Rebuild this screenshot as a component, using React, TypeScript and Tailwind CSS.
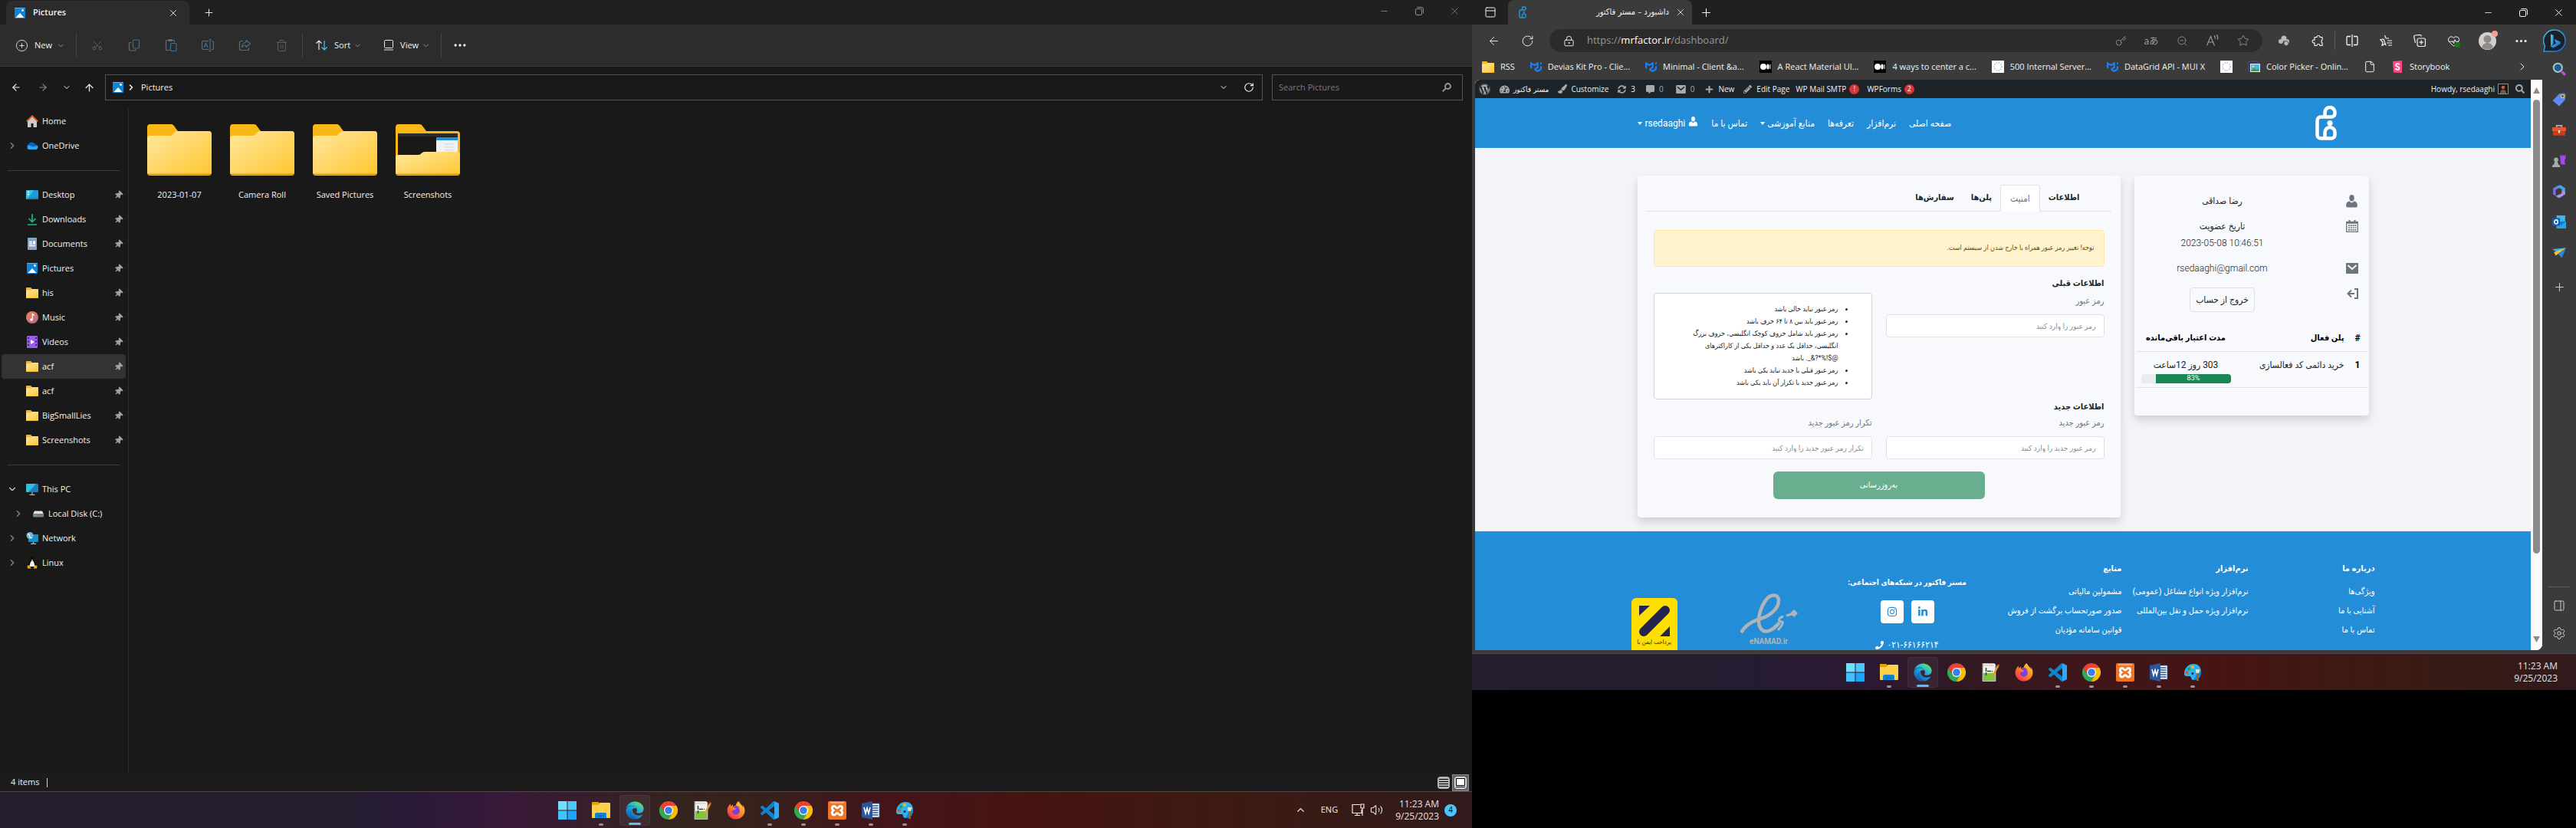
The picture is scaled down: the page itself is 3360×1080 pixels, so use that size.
import { useId, type ReactNode } from "react";
import {
  ArrowLeft, ArrowRight, ArrowUp, ChevronDown, ChevronRight, ChevronUp, CirclePlus,
  File, HeartPulse, Key, LockKeyhole, Minus, MoreHorizontal, PanelRight, PanelTop, Plus, RotateCw,
  Scissors, Search, Settings, Star, Trash2, Volume2, X, ZoomOut,
} from "lucide-react";
import {
  FaCommentAlt, FaEdge, FaFirefoxBrowser, FaInstagram, FaLinkedinIn, FaPaintBrush, FaPencilAlt, FaPhoneAlt, FaPlus,
  FaSearch, FaSyncAlt, FaTachometerAlt, FaThumbtack, FaWordpress,
} from "react-icons/fa";
import { SiMui } from "react-icons/si";

type Kids = { children?: ReactNode };

/* ---------- shared icons ---------- */

function FolderIcon({ w = 16, h = 14, preview = false }: { w?: number; h?: number; preview?: boolean }) {
  const id = useId();
  return (
    <svg width={w} height={h} viewBox="0 0 84 67" preserveAspectRatio="none" aria-hidden="true">
      <defs>
        <linearGradient id={id} x1="0" y1="0" x2="1" y2="1">
          <stop offset="0" stopColor="#ffe8a0" />
          <stop offset="1" stopColor="#ffc62e" />
        </linearGradient>
      </defs>
      <path d="M4 0h27c3 0 4 2 6 5l3 4h40a4 4 0 0 1 4 4v49H0V4a4 4 0 0 1 4-4z" fill="#f9b818" />
      {preview ? (
        <>
          <path d="M3 12h78v34H3z" fill="#191919" />
          <path d="M3 12h78v4H3z" fill="#2b2b2b" />
          <path d="M53 17h28v29H53z" fill="#eef1f6" />
          <path d="M53 17h28v4H53z" fill="#238ed7" />
          <path d="M64 26h12M64 30h12M64 34h12" stroke="#d3d7dd" />
          <path d="M0 44a4 4 0 0 1 4-4h26c3 0 4-4 8-4h42a4 4 0 0 1 4 4v23a4 4 0 0 1-4 4H4a4 4 0 0 1-4-4z" fill={`url(#${id})`} />
        </>
      ) : (
        <path d="M0 19a4 4 0 0 1 4-4h26c4 0 5-6 9-6h41a4 4 0 0 1 4 4v50a4 4 0 0 1-4 4H4a4 4 0 0 1-4-4z" fill={`url(#${id})`} />
      )}
      <path d="M1 65.500h82" stroke="#c98f15" strokeWidth="1.500" />
    </svg>
  );
}

function PictureIcon() {
  return (
    <svg width="16" height="16" viewBox="0 0 16 16" aria-hidden="true">
      <rect x="1" y="1" width="14" height="14" rx="1" fill="#0f83d6" />
      <path d="M1 2a1 1 0 0 1 1-1h12a1 1 0 0 1 1 1z" fill="#55b8f3" />
      <path d="M2.500 14 8 8l5.500 6z" fill="#fff" />
      <circle cx="11.500" cy="4.500" r="1.400" fill="#fff" />
    </svg>
  );
}

const svg16 = { width: 16, height: 16, viewBox: "0 0 16 16", "aria-hidden": true } as const;

const RestoreIcon = () => (
  <svg width="11" height="11" viewBox="0 0 11 11" fill="none" stroke="currentColor" aria-hidden="true">
    <rect x=".500" y="2.500" width="8" height="8" rx="1.500" />
    <path d="M2.500.500H8a2.500 2.500 0 0 1 2.500 2.500v5.500" />
  </svg>
);

const HomeIcon = () => (
  <svg {...svg16}>
    <path d="M2 7.500 8 2l6 5.500V16H9.500v-5h-3v5H2z" fill="#c9cbce" />
    <path d="M.800 8.500 8 1.300l7.200 7.200" fill="none" stroke="#e8681a" strokeWidth="1.800" />
  </svg>
);
const CloudIcon = () => (
  <svg {...svg16}>
    <path d="M4 13a4 4 0 0 1-.500-7.400A5 5 0 0 1 12 6.500 3.300 3.300 0 0 1 13 13z" fill="#0a63c0" />
    <path d="M3 13a3 3 0 0 1 0-5c3-1 4 1 6 1.500L14.500 8A3.200 3.200 0 0 1 13 13z" fill="#2aa5f0" />
  </svg>
);
const DesktopIcon = () => (
  <svg {...svg16}>
    <rect y="2" width="16" height="12" rx="1" fill="#1b9bd8" />
    <path d="M0 3a1 1 0 0 1 1-1h9L2 14H1a1 1 0 0 1-1-1z" fill="#38c7e2" />
    <path d="M2 4.500h2M2 7.500h2" stroke="#fff" strokeWidth="1.500" />
    <path d="M0 13h16" stroke="#0d6db0" />
  </svg>
);
const DownloadIcon = () => (
  <svg {...svg16} fill="none" stroke="#22b58b" strokeWidth="1.700">
    <path d="M8 1v10M3.500 7 8 11.500 12.500 7M2 15h12" />
  </svg>
);
const DocIcon = () => (
  <svg {...svg16}>
    <rect x="2" width="12" height="16" rx="1" fill="#8aa4c0" />
    <path d="M4 5.500h4M4 8h4M4 10.500h8" stroke="#fff" strokeWidth="1.300" />
    <rect x="9" y="4.500" width="3" height="4" fill="#fff" />
  </svg>
);
function MusicIcon() {
  const id = useId();
  return (
    <svg {...svg16}>
      <defs>
        <linearGradient id={id} x1="0" y1="0" x2="1" y2="1">
          <stop offset="0" stopColor="#f08a4b" />
          <stop offset="1" stopColor="#b85c9a" />
        </linearGradient>
      </defs>
      <circle cx="8" cy="8" r="8" fill={`url(#${id})`} />
      <circle cx="7" cy="11" r="1.800" fill="#fff" />
      <path d="M8.300 11V3.500l2.500 2" fill="none" stroke="#fff" strokeWidth="1.200" />
    </svg>
  );
}
const VideoIcon = () => (
  <svg {...svg16}>
    <rect x="1" width="14" height="16" rx="1" fill="#9b5cf0" />
    <path d="M3 2v12M13 2v12" stroke="#3c1a78" strokeWidth="1.800" strokeDasharray="2 2.500" />
    <path d="M6 5v6l5-3z" fill="#fff" />
  </svg>
);
const PcIcon = () => (
  <svg {...svg16}>
    <rect y="1" width="16" height="11" rx="1" fill="#1480c4" />
    <path d="M0 2a1 1 0 0 1 1-1h12L3 12H1a1 1 0 0 1-1-1z" fill="#2fc0e0" />
    <path d="M8 12v3M4.500 15.300h7" stroke="#a8b4be" strokeWidth="1.300" />
  </svg>
);
const DiskIcon = () => (
  <svg {...svg16}>
    <path d="M3 4.500h10l2 4H1z" fill="#e2e4e7" />
    <rect x="1" y="8" width="14" height="4.500" rx="1" fill="#7b7f84" />
    <circle cx="4" cy="10.300" r=".900" fill="#4be05a" />
  </svg>
);
const NetworkIcon = () => (
  <svg {...svg16}>
    <rect x="3" y="3" width="13" height="10" rx="1" fill="#1590c8" />
    <path d="M9.500 13v2M6 15.300h7" stroke="#a8b4be" strokeWidth="1.300" />
    <circle cx="5" cy="4.500" r="4.500" fill="#6fb4dc" />
    <path d="M2 2.500c2 0 3 1 2.500 3S7 7 7.500 8" stroke="#dff1fb" strokeWidth="1.500" fill="none" />
  </svg>
);
const LinuxIcon = () => (
  <svg {...svg16}>
    <path d="M8 0c2 0 2.500 1.500 2.500 4S14 9 13 13l-5 2-5-2C2 9 5.500 6.500 5.500 4S6 0 8 0z" fill="#0b0b0b" />
    <path d="M8 5c2 1 3.500 4 3 8H5c-.500-4 1-7 3-8z" fill="#f5f5f5" />
    <path d="M6.500 4h3L8 5.500zM1.500 12l3-1 2 4.500H2zM14.500 12l-3-1-2 4.500H14z" fill="#e3a51a" />
  </svg>
);

/* ---------- taskbar ---------- */

const WindowsIcon = () => (
  <svg width="24" height="24" viewBox="0 0 24 24" aria-hidden="true">
    <path d="M0 0h11.500v11.500H0z" fill="#6fe0fb" />
    <path d="M12.500 0H24v11.500H12.500z" fill="#4cc8fb" />
    <path d="M0 12.500h11.500V24H0z" fill="#45c1fa" />
    <path d="M12.500 12.500H24V24H12.500z" fill="#1ea4fb" />
  </svg>
);
const ExplorerIcon = () => (
  <svg width="24" height="24" viewBox="0 0 24 24" aria-hidden="true">
    <path d="M0 2a1 1 0 0 1 1-1h7l2 2.500H0z" fill="#e5a10a" />
    <path d="M0 6V3h9l2-1h12a1 1 0 0 1 1 1v18a1 1 0 0 1-1 1H1a1 1 0 0 1-1-1z" fill="#ffd04a" />
    <path d="M0 5V2a1 1 0 0 1 1-1h7l2 2-2 2z" fill="#e5a10a" />
    <path d="M4 22v-5a2 2 0 0 1 2-2h11a2 2 0 0 1 2 2v5z" fill="#1583d4" />
    <path d="M7.500 19h8" stroke="#0b62ab" strokeWidth="1.200" />
  </svg>
);
function EdgeIcon() {
  const id = useId();
  return (
    <>
      <svg width="0" height="0" className="absolute" aria-hidden="true">
        <linearGradient id={id} x1="0.200" y1="1" x2="0.800" y2="0.100">
          <stop offset="0" stopColor="#0c59a4" />
          <stop offset=".5" stopColor="#1b9de2" />
          <stop offset=".8" stopColor="#34c6bd" />
          <stop offset="1" stopColor="#66e05a" />
        </linearGradient>
      </svg>
      <FaEdge size={24} fill={`url(#${id})`} />
    </>
  );
}
function FirefoxIcon() {
  const id = useId();
  return (
    <>
      <svg width="0" height="0" className="absolute" aria-hidden="true">
        <linearGradient id={id} x1="1" y1="0" x2="0.200" y2="1">
          <stop offset="0" stopColor="#ffe14a" />
          <stop offset=".5" stopColor="#ff8a1e" />
          <stop offset="1" stopColor="#f8245c" />
        </linearGradient>
      </svg>
      <span className="relative flex size-6 items-center justify-center">
        <span className="absolute size-3 rounded-full bg-[#7a3fe0]" />
        <FaFirefoxBrowser size={24} fill={`url(#${id})`} className="relative" />
      </span>
    </>
  );
}
const ChromeIcon = () => (
  <svg width="24" height="24" viewBox="0 0 24 24" aria-hidden="true">
    <path d="M12 12V6h10.400A12 12 0 0 1 12 24z" fill="#fbbc05" />
    <path d="M12 12 17.200 15 12 24A12 12 0 0 1 1.600 6l5.200 9z" fill="#34a853" />
    <path d="M1.600 6A12 12 0 0 1 12 0a12 12 0 0 1 10.400 6H12l-5.200 9z" fill="#e94335" />
    <circle cx="12" cy="12" r="6" fill="#fff" />
    <circle cx="12" cy="12" r="4.800" fill="#3b7ded" />
  </svg>
);
const NotepadIcon = () => (
  <svg width="24" height="24" viewBox="0 0 24 24" aria-hidden="true">
    <path d="M2 0h15l2 2v22H2z" fill="#f1f1ef" stroke="#8d8d8d" />
    <path d="M3 13h15v10H3z" fill="#7fc63a" />
    <path d="M6.500 6v10M8 10.500h7" stroke="#3b3b3b" strokeWidth="1.500" strokeDasharray="5 1" />
    <path d="M3 3h14" stroke="#b5b5b5" strokeDasharray="1 1" strokeWidth="1.500" />
    <path d="M22.500 3 15 17" stroke="#e0a020" strokeWidth="2.500" />
    <path d="m23.200 1.500-1 2" stroke="#c3423c" strokeWidth="2.500" />
  </svg>
);
const CodeIcon = () => (
  <svg width="24" height="24" viewBox="0 0 24 24" aria-hidden="true">
    <path
      d="M23.150 2.587L18.210.210a1.494 1.494 0 0 0-1.705.290l-9.460 8.630-4.120-3.128a.999.999 0 0 0-1.276.057L.327 7.261A1 1 0 0 0 .326 8.740L3.899 12 .326 15.260a1 1 0 0 0 .001 1.479L1.650 17.940a.999.999 0 0 0 1.276.057l4.120-3.128 9.460 8.630a1.492 1.492 0 0 0 1.704.290l4.942-2.377A1.500 1.500 0 0 0 24 20.060V3.939a1.500 1.500 0 0 0-.850-1.352zm-5.146 14.861L10.826 12l7.178-5.448v10.896z"
      fill="#0f83cc"
    />
    <path d="M18 .200 23.150 2.600A1.500 1.500 0 0 1 24 4v16a1.500 1.500 0 0 1-.850 1.400L18 23.800z" fill="#2fa8f0" />
  </svg>
);
const XamppIcon = () => (
  <svg width="24" height="24" viewBox="0 0 24 24" aria-hidden="true">
    <rect width="24" height="24" rx="2" fill="#ee7426" />
    <path d="M3 2h18" stroke="#f8b98c" strokeWidth="1.500" />
    <path
      d="M8 6.500c-3.500 0-3.500 4.500-.500 5.500-3 1-3 6 .500 6 2 0 2.500-2.500 4-2.500s2 2.500 4 2.500c3.500 0 3.500-5 .500-6 3-1 3-5.500-.500-5.500-2 0-2 2.500-4 2.500s-2-2.500-4-2.500z"
      fill="none" stroke="#fff" strokeWidth="2.800" strokeLinejoin="round"
    />
  </svg>
);
const WordIcon = () => (
  <svg width="24" height="24" viewBox="0 0 24 24" aria-hidden="true">
    <rect x="11" y="3" width="12" height="18" fill="#fff" stroke="#2b579a" strokeWidth=".8" />
    <path d="M14 6h7.500M14 9h7.500M14 12h7.500M14 15h7.500M14 18h7.500" stroke="#2b579a" strokeWidth="1.400" />
    <path d="M0 3 14 0v24L0 21z" fill="#2b579a" />
    <path d="m3 8 2 8 2-7 2 7 2-8" fill="none" stroke="#fff" strokeWidth="1.600" />
  </svg>
);
const PaintIcon = () => (
  <svg width="24" height="24" viewBox="0 0 24 24" aria-hidden="true">
    <path d="M13 1c7 0 10 5 10 10 0 8-5 11-10 11-4 0-2-5-5-5s-7 1-7-3C1 7 6 1 13 1z" fill="#2db4ec" />
    <path d="M13 22c5 0 10-3 10-11l-4-1-4 9z" fill="#1482cf" />
    <circle cx="4.500" cy="12" r="2" fill="#e64a30" />
    <circle cx="7" cy="7.500" r="2" fill="#2f9b3d" />
    <circle cx="12" cy="5" r="2" fill="#f5b51a" />
    <circle cx="12" cy="13.500" r="1.500" fill="#14324d" />
    <path d="M16 8h5v3l-1 2h-3l-1-2z" fill="#f2d9b4" />
    <path d="M18.500 13v10" stroke="#a5641c" strokeWidth="2.800" />
  </svg>
);

const apps: { name: string; icon: ReactNode; state: "idle" | "open" | "active" }[] = [
  { name: "Start", icon: <WindowsIcon />, state: "idle" },
  { name: "File Explorer", icon: <ExplorerIcon />, state: "open" },
  { name: "Edge", icon: <EdgeIcon />, state: "active" },
  { name: "Chrome", icon: <ChromeIcon />, state: "idle" },
  { name: "Notepad++", icon: <NotepadIcon />, state: "idle" },
  { name: "Firefox", icon: <FirefoxIcon />, state: "idle" },
  { name: "Code", icon: <CodeIcon />, state: "open" },
  { name: "Chrome profile", icon: <ChromeIcon />, state: "open" },
  { name: "XAMPP", icon: <XamppIcon />, state: "open" },
  { name: "Word", icon: <WordIcon />, state: "open" },
  { name: "Paint", icon: <PaintIcon />, state: "open" },
];

const markClass = {
  idle: "hidden",
  open: "absolute bottom-0 h-[3px] w-1.5 rounded-full bg-[#a08d96]",
  active: "absolute bottom-0 h-[3px] w-4 rounded-full bg-[#4cc2ff]",
};

function AppStrip() {
  return (
    <div className="flex justify-center gap-1">
      {apps.map((a) => (
        <button
          key={a.name}
          aria-label={a.name}
          className={
            a.state === "active"
              ? "relative flex size-10 items-center justify-center rounded border border-white/5 bg-white/5"
              : "relative flex size-10 items-center justify-center"
          }
        >
          {a.icon}
          <span className={markClass[a.state]} />
        </button>
      ))}
    </div>
  );
}

const Clock = () => (
  <div className="text-right font-[Open_Sans] text-[12px] leading-4 text-[#e6e0e0]">
    <p>11:23 AM</p>
    <p>9/25/2023</p>
  </div>
);

/* ---------- file explorer ---------- */

const Tool = ({ label, children }: Kids & { label: string }) => (
  <button aria-label={label} className="flex w-12 items-center justify-center text-[#6a6a6a]">
    {children}
  </button>
);

const line16 = { ...svg16, fill: "none", stroke: "#6a6a6a", strokeWidth: 1.2 } as const;
const blue = "#3e6f8c";

type Place = { name: string; icon: ReactNode; chevron?: "right" | "down"; pin?: boolean; selected?: boolean; nested?: boolean };

const folder = <FolderIcon />;
const placeGroups: Place[][] = [
  [
    { name: "Home", icon: <HomeIcon /> },
    { name: "OneDrive", icon: <CloudIcon />, chevron: "right" },
  ],
  [
    { name: "Desktop", icon: <DesktopIcon />, pin: true },
    { name: "Downloads", icon: <DownloadIcon />, pin: true },
    { name: "Documents", icon: <DocIcon />, pin: true },
    { name: "Pictures", icon: <PictureIcon />, pin: true },
    { name: "his", icon: folder, pin: true },
    { name: "Music", icon: <MusicIcon />, pin: true },
    { name: "Videos", icon: <VideoIcon />, pin: true },
    { name: "acf", icon: folder, pin: true, selected: true },
    { name: "acf", icon: folder, pin: true },
    { name: "BigSmallLies", icon: folder, pin: true },
    { name: "Screenshots", icon: folder, pin: true },
  ],
  [
    { name: "This PC", icon: <PcIcon />, chevron: "down" },
    { name: "Local Disk (C:)", icon: <DiskIcon />, chevron: "right", nested: true },
    { name: "Network", icon: <NetworkIcon />, chevron: "right" },
    { name: "Linux", icon: <LinuxIcon />, chevron: "right" },
  ],
];

function PlaceRow({ p }: { p: Place }) {
  return (
    <li className={p.selected ? "rounded-sm bg-[#333333]" : ""}>
      <button className={p.nested ? "flex h-8 w-full items-center pl-3.5" : "flex h-8 w-full items-center pl-1.5"}>
        <span className="flex w-4 justify-center">
          {p.chevron === "right" && <ChevronRight size={14} className="text-[#8a8a8a]" />}
          {p.chevron === "down" && <ChevronDown size={14} className="text-[#d0d0d0]" />}
        </span>
        <span className="ml-2.5 flex w-4 justify-center">{p.icon}</span>
        <span className="ml-[5px] flex-1 text-left">{p.name}</span>
        {p.pin && <FaThumbtack size={11} className="mr-1 rotate-45 text-[#98a2ab]" />}
      </button>
    </li>
  );
}

function Explorer() {
  return (
    <section className="flex h-screen min-w-0 flex-[4] flex-col bg-[#191919] font-[Open_Sans] text-[11px] text-[#f2f2f2]">
      <header className="flex h-8 items-end bg-[#202020] pl-2">
        <div className="flex h-[31px] w-[239px] items-center rounded-t-lg bg-[#2c2c2c] px-2.5">
          <PictureIcon />
          <span className="ml-[9px] flex-1 font-semibold">Pictures</span>
          <button aria-label="Close tab" className="mr-1"><X size={14} strokeWidth={1.5} /></button>
        </div>
        <button aria-label="New tab" className="flex h-8 w-[50px] items-center justify-center"><Plus size={15} strokeWidth={1.5} /></button>
        <div className="ml-auto flex h-7 items-center self-start text-[#8c8c8c]">
          <button aria-label="Minimize" className="flex w-[46px] justify-center"><Minus size={13} strokeWidth={1.5} /></button>
          <button aria-label="Restore" className="flex w-[46px] justify-center"><RestoreIcon /></button>
          <button aria-label="Close" className="flex w-[46px] justify-center"><X size={15} strokeWidth={1.2} /></button>
        </div>
      </header>

      <div className="flex h-[55px] items-stretch border-b border-[#3c3c3c] bg-[#2c2c2c] py-[11px]">
        <button className="flex w-[99px] items-center pl-5">
          <CirclePlus size={17} strokeWidth={1.2} />
          <span className="ml-2">New</span>
          <ChevronDown size={11} className="ml-1.5 text-[#9a9a9a]" />
        </button>
        <div className="flex border-x border-[#424242] px-[3px]">
          <Tool label="Cut"><Scissors size={16} strokeWidth={1.2} className="-rotate-90" /></Tool>
          <Tool label="Copy">
            <svg {...line16}><path d="M4 4.500H2.500a1 1 0 0 0-1 1v8a1.500 1.500 0 0 0 1.500 1.500h6a1 1 0 0 0 1-1V13" /><rect x="6.500" y="1" width="8" height="11" rx="1.500" stroke={blue} /></svg>
          </Tool>
          <Tool label="Paste">
            <svg {...line16}><path d="M6.500 14.500h-4a1 1 0 0 1-1-1v-11a1 1 0 0 1 1-1h9a1 1 0 0 1 1 1V4M5 .500h4v2H5z" /><rect x="7.500" y="5.500" width="7.500" height="10" rx="1" stroke={blue} /></svg>
          </Tool>
          <Tool label="Rename">
            <svg {...line16}><path d="M9 2.500H2.500a2 2 0 0 0-2 2v7a2 2 0 0 0 2 2H9M13 2.500h.500a2 2 0 0 1 2 2v7a2 2 0 0 1-2 2H13" /><path d="M3 11l2.500-6L8 11M4 9h3M11 1v14M9.500.500h3M9.500 15.500h3" stroke={blue} /></svg>
          </Tool>
          <Tool label="Share">
            <svg {...line16}><path d="M6 2.500H3.500a2 2 0 0 0-2 2v8a2 2 0 0 0 2 2h8a2 2 0 0 0 2-2V11" /><path d="M10 1.500 15.500 6 10 10.500V8C7 8 5.500 9 4.500 11c0-4 2-6.500 5.500-7z" stroke={blue} strokeLinejoin="round" /></svg>
          </Tool>
          <Tool label="Delete"><Trash2 size={17} strokeWidth={1.2} /></Tool>
        </div>
        <button className="flex items-center pl-4">
          <svg width="17" height="16" viewBox="0 0 17 16" fill="none" strokeWidth="1.200" aria-hidden="true">
            <path d="M5 14V2M1.500 5.500 5 2l3.500 3.500" stroke="#e8e8e8" />
            <path d="M12 2v12M8.500 10.500 12 14l3.500-3.500" stroke="#4cc2ff" />
          </svg>
          <span className="ml-2">Sort</span>
          <ChevronDown size={11} className="ml-1 text-[#9a9a9a]" />
        </button>
        <button className="flex items-center border-r border-[#424242] pr-3.5 pl-7">
          <svg width="14" height="14" viewBox="0 0 14 14" fill="none" stroke="#e8e8e8" aria-hidden="true">
            <rect x="1.500" y=".500" width="11" height="10" rx="1" />
            <path d="M1 13h12" />
          </svg>
          <span className="ml-2">View</span>
          <ChevronDown size={11} className="ml-1 text-[#9a9a9a]" />
        </button>
        <button aria-label="More" className="flex w-12 items-center justify-center"><MoreHorizontal size={20} /></button>
      </div>

      <div className="flex items-center pt-2.5 pr-3 pb-[11px]">
        <div className="flex w-[137px] items-center text-[#f0f0f0]">
          <button aria-label="Back" className="ml-3.5"><ArrowLeft size={14} /></button>
          <button aria-label="Forward" className="ml-[21px] text-[#8a8a8a]"><ArrowRight size={14} /></button>
          <button aria-label="Recent" className="ml-[18px]"><ChevronDown size={12} /></button>
          <button aria-label="Up" className="ml-4"><ArrowUp size={15} /></button>
        </div>
        <div className="flex h-[34px] flex-1 items-center border border-[#535353] px-2">
          <PictureIcon />
          <ChevronRight size={12} strokeWidth={3} className="ml-[3px]" />
          <span className="ml-[7px] flex-1">Pictures</span>
          <button aria-label="History"><ChevronDown size={12} /></button>
          <button aria-label="Refresh" className="mr-0.5 ml-5"><RotateCw size={14} /></button>
        </div>
        <label className="ml-3 flex h-[34px] w-[249px] items-center border border-[#535353] px-2">
          <input aria-label="Search Pictures" placeholder="Search Pictures" className="min-w-0 flex-1 bg-transparent outline-none placeholder:text-[#7a7a7a]" />
          <svg width="12" height="12" viewBox="0 0 12 12" fill="none" stroke="#9a9a9a" strokeWidth="1.800" className="mr-1.5" aria-hidden="true">
            <circle cx="7.500" cy="4.500" r="3.500" />
            <path d="M5 7 .700 11.300" />
          </svg>
        </label>
      </div>

      <div className="flex min-h-0 flex-1">
        <nav className="w-[168px] border-r border-[#2e2e2e] pr-[3px] pl-0.5">
          {placeGroups.map((g, i) => (
            <ul key={i}>
              {i > 0 && <li className="mr-2 ml-2 flex h-8 items-center"><hr className="w-full border-[#3c3c3c]" /></li>}
              {g.map((p, j) => <PlaceRow key={j} p={p} />)}
            </ul>
          ))}
        </nav>
        <ul className="flex flex-1 flex-wrap content-start pt-5 pl-3">
          {["2023-01-07", "Camera Roll", "Saved Pictures", "Screenshots"].map((n) => (
            <li key={n} className="flex w-[108px] flex-col items-center">
              <FolderIcon w={84} h={67} preview={n === "Screenshots"} />
              <span className="mt-4 leading-[18px]">{n}</span>
            </li>
          ))}
        </ul>
      </div>

      <div className="flex h-[23px] items-center bg-[#1c1c1c] pl-3.5">
        <span>4 items</span>
        <span className="ml-2.5 h-3 w-px bg-[#d0d0d0]" />
        <div className="mr-1 ml-auto flex items-center gap-[3px]">
          <button aria-label="Details view" className="flex size-4 flex-col justify-center gap-0.5 rounded-sm bg-[#b4b4b4] px-0.5">
            <span className="h-px bg-black" /><span className="h-px bg-black" /><span className="h-px bg-black" /><span className="h-px bg-black" />
          </button>
          <button aria-label="Large icons" className="flex size-[22px] items-center justify-center border border-[#8a8a8a] bg-[#636363]">
            <span className="flex size-4 flex-col items-center justify-center gap-px rounded-sm bg-[#d8d8d8]">
              <span className="h-2.5 w-3 border border-black bg-white" />
              <span className="h-px w-3 bg-black" />
            </span>
          </button>
        </div>
      </div>

      <footer className="grid h-12 grid-cols-[1fr_auto_1fr] items-center border-t border-[#54444a] bg-[linear-gradient(90deg,#241e2e_0%,#241d30_24%,#2c1938_29%,#3a1a38_35%,#33241e_46%,#38211c_52%,#43141a_60%,#461410_70%,#3b1a12_85%,#311a1c_100%)]">
        <span />
        <AppStrip />
        <div className="flex items-center justify-end pr-5 text-[#f0eaea]">
          <ChevronUp size={15} />
          <span className="ml-[19px]">ENG</span>
          <svg width="17" height="17" viewBox="0 0 17 17" fill="none" stroke="currentColor" strokeWidth="1.200" className="ml-[18px]" aria-hidden="true">
            <path d="M11 1.500H1v11h12V8M7 12.500V15M4 15.500h7M12 1h4v5h-4zM14 6v10" />
          </svg>
          <Volume2 size={17} strokeWidth={1.5} className="mr-4 ml-[7px]" />
          <Clock />
          <span className="ml-[7px] flex size-4 items-center justify-center rounded-full bg-[#4cc2ff] text-[10px] text-black">4</span>
        </div>
      </footer>
    </section>
  );
}

/* ---------- browser chrome ---------- */

const MediumIcon = () => (
  <svg {...svg16}>
    <path d="M0 0h16v16H0z" fill="#000" />
    <circle cx="5" cy="8" r="4" fill="#fff" />
    <ellipse cx="11" cy="8" rx="1.700" ry="3.600" fill="#fff" />
    <path d="M14 5v6" stroke="#fff" />
  </svg>
);
const SpinnerIcon = () => (
  <svg {...svg16}>
    <path d="M0 0h16v16H0z" fill="#fff" />
    <circle cx="8" cy="8" r="5" fill="none" stroke="#9fb4cc" strokeWidth="2" strokeDasharray="1 2" />
  </svg>
);
const BrandMark = ({ size, color }: { size: number; color: string }) => (
  <svg width={(size * 28) / 45} height={size} viewBox="0 0 28 45" fill="none" stroke={color} strokeWidth="4.500" aria-hidden="true">
    <path d="M12.500 15V8.500a6.500 6.500 0 0 1 13 0V10a4.500 4.500 0 0 1-4.500 4.500H7A4.500 4.500 0 0 0 2.500 19v19A4.500 4.500 0 0 0 7 42.500h14a4.500 4.500 0 0 0 4.500-4.500v-3.500a6.500 6.500 0 0 0-13 0v8" />
    <circle cx="19" cy="22.500" r="3.500" fill={color} stroke="none" />
  </svg>
);
const StorybookIcon = () => (
  <svg {...svg16}>
    <path d="m2 1 12-1v16L3 15.500z" fill="#ff4785" />
    <path d="M10.500 5.500C10 3.500 6 3.700 6 6s4.500 1.500 4.500 4-4.500 2.300-4.700.200" fill="none" stroke="#fff" strokeWidth="1.800" />
  </svg>
);
const PickerIcon = () => (
  <svg {...svg16}>
    <path d="M1 1h12v13H1z" fill="none" stroke="#5c4ab0" strokeDasharray="2 1" />
    <path d="M3 4h13v11H3z" fill="#e8eef5" />
    <path d="M4 5h11v9H4z" fill="#57b2ec" />
    <path d="m4 14 4-5 3 3 2-2 2 4z" fill="#4a9a3c" />
    <circle cx="7" cy="7.500" r="1.300" fill="#ffe04a" />
  </svg>
);
const mui = <SiMui size={15} className="text-[#1684f4]" />;

const bookmarks: { icon: ReactNode; text?: string }[] = [
  { icon: <FolderIcon w={16} h={15} />, text: "RSS" },
  { icon: mui, text: "Devias Kit Pro - Clie..." },
  { icon: mui, text: "Minimal - Client &a..." },
  { icon: <MediumIcon />, text: "A React Material UI..." },
  { icon: <MediumIcon />, text: "4 ways to center a c..." },
  { icon: <SpinnerIcon />, text: "500 Internal Server..." },
  { icon: mui, text: "DataGrid API - MUI X" },
  { icon: <SpinnerIcon /> },
  { icon: <PickerIcon />, text: "Color Picker - Onlin..." },
  { icon: <File size={16} strokeWidth={1.5} /> },
  { icon: <StorybookIcon />, text: "Storybook" },
];

const Slot = ({ label, children }: Kids & { label: string }) => (
  <button aria-label={label} className="flex w-11 items-center justify-center">{children}</button>
);
const FieldSlot = ({ label, children }: Kids & { label: string }) => (
  <button aria-label={label} className="flex w-10 items-center justify-center text-[#9b9b9b]">{children}</button>
);

function BingIcon() {
  const id = useId();
  return (
    <svg width="30" height="30" viewBox="0 0 30 30" aria-hidden="true">
      <defs>
        <linearGradient id={id} x1="0" y1="0" x2="1" y2="1">
          <stop offset="0" stopColor="#3fd0e8" />
          <stop offset="1" stopColor="#1b5fd8" />
        </linearGradient>
      </defs>
      <path d="M15 1a14 14 0 1 1 0 28H1l1.500-7A14 14 0 0 1 15 1z" fill="#1b2128" stroke={`url(#${id})`} strokeWidth="1.500" />
      <path d="M10 6.500 13.500 8v11l-3.500 4zM10 22.500l7-4-2.500-5.500 6 2.500a2.500 2.500 0 0 1 0 5L13.500 24.500z" fill={`url(#${id})`} />
    </svg>
  );
}

const svg18 = { width: 18, height: 18, viewBox: "0 0 16 16", "aria-hidden": true } as const;

const sideIcons: { name: string; icon: ReactNode }[] = [
  {
    name: "Search",
    icon: (
      <svg {...svg18}>
        <path d="m11 11 4 4" stroke="#c04be8" strokeWidth="3" />
        <circle cx="6.500" cy="6.500" r="5" fill="#1b5f86" stroke="#aebdc9" strokeWidth="1.800" />
      </svg>
    ),
  },
  {
    name: "Shopping",
    icon: (
      <svg {...svg18}>
        <path d="m8 1 6-.500 1.500 1.500-.500 6L8 15.500.500 9z" fill="#5b8cf5" />
        <circle cx="12" cy="4" r="1.800" fill="#3a4a8c" stroke="#f2c52e" />
      </svg>
    ),
  },
  {
    name: "Tools",
    icon: (
      <svg {...svg18}>
        <path d="M5 5V2.500h6V5" fill="none" stroke="#a8b0b8" strokeWidth="1.500" />
        <path d="M0 4.500h16V9H0z" fill="#e8562a" />
        <path d="M1 9h14v5H1z" fill="#c93d1c" />
        <path d="M7 8h2v3H7z" fill="#e3e6e9" />
      </svg>
    ),
  },
  {
    name: "Games",
    icon: (
      <svg {...svg18}>
        <path d="M9 1h1.500v1.500h1V1H13v1.500h1V1h1.500v4L14.500 6v4l1 2H10z" fill="#a848ef" />
        <path d="M0 15v-2l2-1 1-4H2V6.500a2.500 2.500 0 1 1 5 0V8H6l1 4 2 1v2z" fill="#a5a8ac" />
      </svg>
    ),
  },
  {
    name: "Microsoft 365",
    icon: (
      <svg {...svg18}>
        <path d="M6 1 1 4v7l3 2V6l4-2.500z" fill="#7c6fe0" />
        <path d="m6 1 4-.500 5 3.500v5l-4-2V5L6 3z" fill="#3fa5e8" />
        <path d="M15 8v3l-7 4.500L4 13l7-3V7z" fill="#b98be8" />
      </svg>
    ),
  },
  {
    name: "Outlook",
    icon: (
      <svg {...svg18}>
        <path d="M5 0h10v8H5z" fill="#35b8f1" />
        <path d="M5 7h11v8H5z" fill="#1279cf" />
        <path d="m5 7 5.500 4L16 7v8H5z" fill="#28a2e8" />
        <rect y="3" width="9" height="9" rx="1" fill="#0a5fb4" />
        <ellipse cx="4.500" cy="7.500" rx="2" ry="2.300" fill="none" stroke="#fff" strokeWidth="1.300" />
      </svg>
    ),
  },
  {
    name: "Drop",
    icon: (
      <svg {...svg18}>
        <path d="M0 3.500 16 2l-9 6z" fill="#38b5e8" />
        <path d="m16 2-5 12-4-5z" fill="#2f86e8" />
        <path d="M16 2 2 7l2 4z" fill="#f5c22e" />
      </svg>
    ),
  },
];

/* ---------- web page ---------- */

const Badge = ({ children }: Kids) => (
  <span className="flex size-[13px] items-center justify-center rounded-full bg-[#d63638] text-[9px] text-white">{children}</span>
);

const tabs = ["اطلاعات", "امنیت", "پلن‌ها", "سفارش‌ها"];

const rules: ReactNode[] = [
  "رمز عبور نباید خالی باشد",
  "رمز عبور باید بین ۸ تا ۶۴ حرف باشد",
  <>
    رمز عبور باید شامل حروف کوچک انگلیسی، حروف بزرگ انگلیسی، حداقل یک عدد و حداقل یکی از کاراکترهای{" "}
    <span className="inline-block">@$!%*?&amp;_. باشد</span>
  </>,
  "رمز عبور قبلی با جدید نباید یکی باشد",
  "رمز عبور جدید با تکرار آن باید یکی باشد",
];

function Field({ id, label, placeholder }: { id: string; label: string; placeholder: string }) {
  return (
    <div>
      <label htmlFor={id} className="block leading-[22px] text-[#6c757d]">{label}</label>
      <input
        id={id}
        type="password"
        placeholder={placeholder}
        className="mt-1.5 h-[30px] w-full rounded-sm border border-[#dee2e6] bg-white px-2.5 text-[10px] outline-none placeholder:text-[#868e96]"
      />
    </div>
  );
}

const columns = [
  { title: "درباره ما", links: ["ویژگی‌ها", "آشنایی با ما", "تماس با ما"] },
  { title: "نرم‌افزار", links: ["نرم‌افزار ویژه انواع مشاغل (عمومی)", "نرم‌افزار ویژه حمل و نقل بین‌المللی"] },
  { title: "منابع", links: ["مشمولین مالیاتی", "صدور صورتحساب برگشت از فروش", "قوانین سامانه مؤدیان"] },
];

const Caret = () => (
  <svg width="6" height="4" viewBox="0 0 6 4" className="inline-block" fill="currentColor" aria-hidden="true"><path d="M0 0h6L3 4z" /></svg>
);

const MailIcon = ({ w, flap }: { w: number; flap: string }) => (
  <svg width={w} height={w - 2} viewBox="0 0 16 14" aria-hidden="true">
    <rect width="16" height="14" rx="1" fill="currentColor" />
    <path d="m2.500 3 5.500 5 5.500-5" fill="none" stroke={flap} strokeWidth="1.800" />
  </svg>
);
const UserIcon = ({ s }: { s: number }) => (
  <svg width={s} height={s} viewBox="0 0 14 16" fill="currentColor" aria-hidden="true">
    <ellipse cx="7" cy="4" rx="3" ry="4" />
    <path d="M0 13c0-3 1.500-4.500 4-5l3 2 3-2c2.500.500 4 2 4 5 0 2-1 2.500-2 2.500H2C1 15.500 0 15 0 13z" />
  </svg>
);
const CalendarIcon = () => (
  <svg {...svg16} fill="none" stroke="currentColor">
    <path d="M.700 2.500h14.600v13H.700z" strokeWidth="1.300" />
    <path d="M.500 3.500h15" strokeWidth="2.500" />
    <path d="M4.500 0v3.500M11.500 0v3.500" strokeWidth="2" />
    <path d="M3 7.200h10.500M3 10h10.500M3 12.800h10.500" strokeWidth="1.700" strokeDasharray="2 .8" />
  </svg>
);

function AdminBar() {
  return (
    <div className="flex h-6 items-center bg-[#1d2327] pl-[5px] font-[Open_Sans] text-[10px] text-[#f0f0f1]">
      <FaWordpress size={15} className="text-[#a7aaad]" />
      <a href="#site" className="ml-3 flex items-center gap-[5px]">
        <FaTachometerAlt size={13} className="text-[#a7aaad]" />
        <span dir="rtl" className="font-['DejaVu_Sans_Condensed']">مستر فاکتور</span>
      </a>
      <a href="#customize" className="ml-3 flex items-center gap-[5px]"><FaPaintBrush size={12} className="text-[#a7aaad]" />Customize</a>
      <a href="#updates" className="ml-3 flex items-center gap-1.5"><FaSyncAlt size={11} className="text-[#a7aaad]" />3</a>
      <a href="#comments" className="ml-3.5 flex items-center gap-1.5 text-[#a7aaad]"><FaCommentAlt size={11} />0</a>
      <a href="#mail" className="ml-4 flex items-center gap-1.5 text-[#a7aaad]"><MailIcon w={13} flap="#1d2327" />0</a>
      <a href="#new" className="ml-3.5 flex items-center gap-1.5"><FaPlus size={11} className="text-[#a7aaad]" />New</a>
      <a href="#edit" className="ml-3 flex items-center gap-1.5"><FaPencilAlt size={11} className="text-[#a7aaad]" />Edit Page</a>
      <a href="#smtp" className="ml-2 flex items-center gap-1">WP Mail SMTP <Badge>!</Badge></a>
      <a href="#forms" className="ml-2.5 flex items-center gap-1">WPForms <Badge>2</Badge></a>
      <a href="#profile" className="mr-[9px] ml-auto flex items-center gap-1">
        Howdy, rsedaaghi
        <svg width="14" height="14" viewBox="0 0 14 14" aria-hidden="true">
          <path d="M.500.500h13v13H.500z" fill="#20140f" stroke="#8c8f94" />
          <circle cx="7" cy="5" r="2.300" fill="#a9694a" />
          <path d="M3 13c0-4 2-5 4-5s4 1 4 5z" fill="#6f5a4c" />
        </svg>
      </a>
      <FaSearch size={12} className="mr-2 text-[#a7aaad]" />
    </div>
  );
}

function WebPage() {
  return (
    <div className="flex h-[744px] overflow-hidden rounded-tl-md rounded-br-lg bg-white">
      <div className="flex min-w-0 flex-1 flex-col bg-[#f4f3f8]">
        <AdminBar />
        <div dir="rtl" className="flex flex-1 flex-col font-['Roboto','DejaVu_Sans_Condensed',sans-serif] text-[11px] text-[#212529]">
          <header className="h-[65px] bg-[#238ed7] text-white">
            <div className="mx-auto flex h-full max-w-[954px] items-center justify-between">
              <a href="#home" aria-label="مستر فاکتور" className="mr-[42px]"><BrandMark size={45} color="#fff" /></a>
              <nav className="flex items-center gap-[17px] text-[12px]">
                <a href="#main">صفحه اصلی</a>
                <a href="#app">نرم‌افزار</a>
                <a href="#pricing">تعرفه‌ها</a>
                <a href="#learn">منابع آموزشی <Caret /></a>
                <a href="#contact">تماس با ما</a>
                <a href="#user" className="flex items-center gap-1">
                  <span className="mb-1"><UserIcon s={13} /></span> rsedaaghi <Caret />
                </a>
              </nav>
            </div>
          </header>

          <main className="mx-auto flex w-full max-w-[954px] flex-1 items-start gap-[18px] pt-9">
            <aside className="w-[306px] rounded bg-[#f8f9fc] pt-[22px] pb-9 shadow-[0_6px_12px_rgba(0,0,0,0.15)]">
              <dl className="grid grid-cols-[76px_1fr] gap-y-[11px] text-center text-[12px] leading-[22px] font-light">
                <dt className="flex h-[22px] items-center pr-3.5 text-[#6c757d]"><UserIcon s={17} /></dt>
                <dd>رضا صداقی</dd>
                <dt className="flex h-[22px] items-center pr-3.5 text-[#6c757d]"><CalendarIcon /></dt>
                <dd>تاریخ عضویت<span dir="ltr" className="block">2023-05-08 10:46:51</span></dd>
                <dt className="flex h-[22px] items-center pr-3.5 text-[#6c757d]"><MailIcon w={16} flap="#f8f9fc" /></dt>
                <dd>rsedaaghi@gmail.com</dd>
                <dt className="flex h-[22px] items-center pr-3.5 text-[#6c757d]">
                  <svg width="15" height="14" viewBox="0 0 15 14" fill="none" stroke="currentColor" strokeWidth="2" aria-hidden="true">
                    <path d="M10 1h4v12h-4M10 7H2M6 2.500 1.500 7 6 11.500" />
                  </svg>
                </dt>
                <dd><button className="mt-[3px] h-8 rounded border border-[#dee2e6] px-[7px] leading-none">خروج از حساب</button></dd>
              </dl>
              <table className="mx-[3px] mt-[18px] w-[300px]">
                <thead>
                  <tr className="h-[33px] border-b border-[#dee2e6] text-black">
                    <th scope="col" className="w-[23px] text-[12px]">#</th>
                    <th scope="col" className="pr-1.5 text-right">پلن فعال</th>
                    <th scope="col" className="w-[129px]">مدت اعتبار باقی‌مانده</th>
                  </tr>
                </thead>
                <tbody>
                  <tr className="h-[47px] border-b border-[#dee2e6] align-top text-[12px]">
                    <th scope="row" className="pt-2 text-black">1</th>
                    <td className="pt-2 pr-1.5 leading-[18px]">خرید دائمی کد فعالسازی</td>
                    <td className="px-1.5 pt-2 text-center">
                      <p className="leading-[18px]">303 روز 12ساعت</p>
                      <div className="mt-[3px] h-3 overflow-hidden rounded bg-[#e9ecef]">
                        <div className="h-full bg-[#198754] text-[9px] leading-[11px] text-white" style={{ width: "83%" }} dir="ltr">83%</div>
                      </div>
                    </td>
                  </tr>
                </tbody>
              </table>
            </aside>

            <form className="min-w-0 flex-1 rounded bg-[#f8f9fc] px-3 pt-3 pb-6 shadow-[0_6px_12px_rgba(0,0,0,0.15)]" onSubmit={(e) => e.preventDefault()}>
              <div role="tablist" className="flex h-[35px] border-b border-[#dee2e6] pr-[30px] font-bold">
                {tabs.map((t, i) => (
                  <button
                    key={t}
                    type="button"
                    role="tab"
                    aria-selected={i === 1}
                    className={
                      i === 1
                        ? "-mb-px rounded-t border border-b-0 border-[#dee2e6] bg-white px-3 text-[12px] font-normal text-[#6c757d]"
                        : "px-[11px]"
                    }
                  >
                    {t}
                  </button>
                ))}
              </div>
              <div className="px-[9px]">
                <p role="alert" className="mt-6 flex h-12 items-center rounded border border-[#ffe69c] bg-[#fff3cd] px-3 text-[9px] text-[#664d03]">
                  توجه! تغییر رمز عبور همراه با خارج شدن از سیستم است.
                </p>
                <h2 className="mt-2.5 leading-6 font-bold">اطلاعات قبلی</h2>
                <div className="grid grid-cols-2 gap-[18px]">
                  <Field id="old" label="رمز عبور" placeholder="رمز عبور را وارد کنید" />
                  <ul className="h-[139px] list-disc rounded border border-[#ced4da] bg-white py-3 pr-[43px] pl-8 text-[9px] leading-4">
                    {rules.map((r, i) => <li key={i}>{r}</li>)}
                  </ul>
                </div>
                <h2 className="leading-5 font-bold">اطلاعات جدید</h2>
                <div className="grid grid-cols-2 gap-[18px]">
                  <Field id="new" label="رمز عبور جدید" placeholder="رمز عبور جدید را وارد کنید" />
                  <Field id="repeat" label="تکرار رمز عبور جدید" placeholder="تکرار رمز عبور جدید را وارد کنید" />
                </div>
                <button className="mx-auto mt-4 block h-9 w-[276px] rounded-md bg-[#68ae8f] text-white">به‌روزرسانی</button>
              </div>
            </form>
          </main>

          <footer className="h-[155px] overflow-hidden bg-[#238ed7] text-white">
            <div className="mx-auto grid max-w-[970px] grid-cols-[165px_165px_200px_160px_1fr] items-start pt-10">
              {columns.map((c) => (
                <section key={c.title}>
                  <h3 className="leading-[18px] font-bold">{c.title}</h3>
                  <ul className="pt-2">
                    {c.links.map((l) => (
                      <li key={l} className="h-[25px] leading-[25px] whitespace-nowrap"><a href="#link">{l}</a></li>
                    ))}
                  </ul>
                </section>
              ))}
              <section className="pt-[18px] text-center">
                <h3 className="text-[10px] leading-[18px] font-bold whitespace-nowrap">مستر فاکتور در شبکه‌های اجتماعی:</h3>
                <div className="mt-3.5 flex justify-center gap-2.5 text-[#238ed7]">
                  <a href="#linkedin" aria-label="LinkedIn" className="flex size-[30px] items-center justify-center rounded bg-white"><FaLinkedinIn size={14} /></a>
                  <a href="#instagram" aria-label="Instagram" className="flex size-[30px] items-center justify-center rounded bg-white"><FaInstagram size={14} /></a>
                </div>
                <a href="#phone" className="mt-5 flex items-center justify-center gap-1 text-[12px] leading-4" dir="ltr">
                  <FaPhoneAlt size={11} className="-scale-x-100" />
                  <span>۰۲۱-۶۶۱۶۶۲۱۴</span>
                </a>
              </section>
              <div className="flex justify-between pr-[63px]">
                <div className="mt-10 text-center text-[10px] leading-4 font-bold text-[#b0b3b8]">
                  <svg width="75" height="56" viewBox="0 0 75 56" fill="none" stroke="#b0b3b8" aria-hidden="true">
                    <path d="M1 52C7 42 16 37 26 34c11-3 24-12 24-24 0-8-10-9-16-1-8 10-13 28-8 37 6 9 17 3 25-7" strokeWidth="4.500" />
                    <path d="M56 31c-7 2-7 7-2 7 3 0 0 6-5 11M60 30l7-2" strokeWidth="3" />
                    <path d="m70 22 5 5-5 5-5-5z" fill="#b0b3b8" stroke="none" />
                  </svg>
                  <p>eNAMAD.ir</p>
                  <p className="whitespace-nowrap">اعتماد اینجا</p>
                </div>
                <div className="mt-[47px] w-[60px] rounded-md bg-[#ffdf00] pt-2.5 text-center text-[8px] font-bold text-[#252450]">
                  <svg width="40" height="40" viewBox="0 0 40 40" className="mx-auto" aria-hidden="true">
                    <path d="M0 0h14L0 13zM40 40H27l13-13z" fill="#252450" />
                    <path d="M34 6 6 34" stroke="#252450" strokeWidth="12" strokeLinecap="round" />
                  </svg>
                  <p className="leading-4 font-normal whitespace-nowrap">پرداخت ایمن با</p>
                  <p className="text-[14px] leading-4">زرین‌پال</p>
                </div>
              </div>
            </div>
          </footer>
        </div>
      </div>
      <div className="flex w-[15px] flex-col items-center rounded-tr-lg bg-[#fbfbfb] py-2.5 text-[#8b8b8b]">
        <svg width="9" height="8" viewBox="0 0 9 8" fill="currentColor" aria-hidden="true"><path d="M4.500 0 9 8H0z" /></svg>
        <div className="mt-2 h-[592px] w-[9px] rounded-full bg-[#8b8b8b]" />
        <svg width="9" height="8" viewBox="0 0 9 8" fill="currentColor" className="mt-auto" aria-hidden="true"><path d="M4.500 8 9 0H0z" /></svg>
      </div>
    </div>
  );
}

function Browser() {
  return (
    <section className="flex min-w-0 flex-[3] flex-col font-[Open_Sans] text-[11px] text-[#f2f2f2]">
      <header className="flex h-8 items-center bg-[#202020] pl-4">
        <div className="w-[31px]"><PanelTop size={16} strokeWidth={1.5} /></div>
        <div className="flex h-8 w-60 items-center rounded-t-lg bg-[#3b3b3b] pr-2 pl-3.5">
          <BrandMark size={16} color="#1f8fd0" />
          <span dir="rtl" className="ml-auto font-['DejaVu_Sans_Condensed']">داشبورد – مستر فاکتور</span>
          <button aria-label="Close tab" className="ml-2"><X size={14} strokeWidth={1.5} /></button>
        </div>
        <button aria-label="New tab" className="flex h-8 w-9 items-center justify-center"><Plus size={17} strokeWidth={1.5} /></button>
        <div className="ml-auto flex h-8 items-center">
          <button aria-label="Minimize" className="flex w-[46px] justify-center"><Minus size={13} strokeWidth={1.5} /></button>
          <button aria-label="Restore" className="flex w-[46px] justify-center"><RestoreIcon /></button>
          <button aria-label="Close" className="flex w-[46px] justify-center"><X size={15} strokeWidth={1.5} /></button>
        </div>
      </header>

      <div className="flex flex-col bg-[#3b3b3b]">
        <div className="flex h-[38px] items-center pt-1">
          <button aria-label="Back" className="ml-5"><ArrowLeft size={17} strokeWidth={1.3} /></button>
          <button aria-label="Reload" className="ml-[27px]"><RotateCw size={17} strokeWidth={1.3} /></button>
          <div className="ml-5 flex h-[30px] flex-1 items-center rounded-full bg-[#2b2b2b] pr-[5px] pl-[18px]">
            <LockKeyhole size={15} strokeWidth={1.5} />
            <div role="textbox" aria-label="Address" className="ml-4 flex-1 text-[13px] text-[#989898]">
              https://<span className="text-white">mrfactor.ir</span>/dashboard/
            </div>
            <FieldSlot label="Passwords"><Key size={15} strokeWidth={1.3} className="rotate-180 -scale-x-100 -scale-y-100" /></FieldSlot>
            <FieldSlot label="Translate"><span className="font-[Noto_Sans_CJK_JP] text-[12px]">aあ</span></FieldSlot>
            <FieldSlot label="Zoom out"><ZoomOut size={15} strokeWidth={1.3} /></FieldSlot>
            <FieldSlot label="Read aloud">
              <svg {...svg16} fill="none" stroke="currentColor" strokeWidth="1.200"><path d="m.500 14.500 5-12 5 12M2.500 10h6M10 1.500c1.200 1 1.500 2.500 1 4M13 .500c1.800 1.500 2.200 4 1.200 6" /></svg>
            </FieldSlot>
            <FieldSlot label="Favourite"><Star size={16} strokeWidth={1.3} /></FieldSlot>
          </div>
          <div className="flex w-[409px] items-center pl-1.5">
            <Slot label="Shopping">
              <svg {...svg16} fill="#b9b9b9"><circle cx="4" cy="9" r="3" /><circle cx="8" cy="5" r="3.500" /><circle cx="12" cy="9" r="3" /><circle cx="11" cy="11.500" r="3" stroke="#555" /></svg>
            </Slot>
            <Slot label="Extensions">
              <svg {...svg16} fill="none" stroke="currentColor" strokeWidth="1.200" strokeLinejoin="round"><path d="M4 3.500h3a2 2 0 1 1 4 0h3v3.700a2 2 0 0 0 0 3.600v3.700h-3a2 2 0 0 0-4 0H4v-3.700a2 2 0 1 1 0-3.600z" /></svg>
            </Slot>
            <span className="h-6 w-px bg-[#5c5c5c]" />
            <Slot label="Split screen">
              <svg {...svg16} fill="none" stroke="currentColor" strokeWidth="1.300"><path d="M6 2.500H2a1 1 0 0 0-1 1v9a1 1 0 0 0 1 1h4M10 2.500h4a1 1 0 0 1 1 1v9a1 1 0 0 1-1 1h-4M8 0v16" /></svg>
            </Slot>
            <Slot label="Favourites">
              <svg {...svg16} fill="none" stroke="currentColor" strokeWidth="1.200"><path d="m6.500 1 1.700 4H12M8 14l-1.500-2L3 14.500 4 10 .800 6.500 5 6z" strokeLinejoin="round" /><path d="M10 8h6M9 11h7M11 14h5" /></svg>
            </Slot>
            <Slot label="Collections">
              <svg {...svg16} fill="none" stroke="currentColor" strokeWidth="1.200"><rect x="5" y="5" width="10.500" height="10.500" rx="2" /><path d="M2.500 11 .800 3.500a2 2 0 0 1 1.500-2.500l6-.500a2 2 0 0 1 2 2M10.200 7.500v5.500M7.500 10.200H13" /></svg>
            </Slot>
            <Slot label="Browser essentials">
              <span className="relative"><HeartPulse size={17} strokeWidth={1.4} /><span className="absolute right-0 bottom-0 size-[7px] rounded-full bg-[#107c10]" /></span>
            </Slot>
            <Slot label="Profile">
              <span className="relative flex">
                <svg width="23" height="23" viewBox="0 0 23 23" aria-hidden="true">
                  <circle cx="11.500" cy="11.500" r="11.500" fill="#d2cfcc" />
                  <circle cx="11.500" cy="9" r="5" fill="#8f8b88" />
                  <path d="M4.500 20c0-8 14-8 14 0a11 11 0 0 1-14 0z" fill="#8f8b88" />
                </svg>
                <span className="absolute -top-0.5 -right-0.5 size-2 rounded-full bg-[#f4a09a]" />
              </span>
            </Slot>
            <Slot label="More"><MoreHorizontal size={19} /></Slot>
            <Slot label="Bing"><BingIcon /></Slot>
          </div>
        </div>
        <div className="flex">
          <div className="flex min-w-0 flex-1 flex-col pb-1 pl-1">
            <ul className="flex h-[34px] items-center gap-5 pl-[9px] whitespace-nowrap">
              {bookmarks.map((b, i) => (
                <li key={i}><a href="#bookmark" className="flex items-center gap-2" aria-label={b.text ?? "Bookmark"}>{b.icon}{b.text}</a></li>
              ))}
              <li className="mr-[18px] ml-auto flex"><button aria-label="More bookmarks"><ChevronRight size={16} strokeWidth={1.5} /></button></li>
            </ul>
            <WebPage />
          </div>
          <aside className="flex w-11 flex-col items-center text-[#d8d8d8]">
            {sideIcons.map((s) => (
              <button key={s.name} aria-label={s.name} className="flex h-10 items-center justify-center">{s.icon}</button>
            ))}
            <button aria-label="Customize" className="flex h-12 items-center"><Plus size={17} strokeWidth={1.3} /></button>
            <hr className="mt-auto w-7 border-[#636363]" />
            <button aria-label="Toggle sidebar" className="mt-2 flex h-8 items-center"><PanelRight size={16} strokeWidth={1.4} /></button>
            <button aria-label="Settings" className="mb-1.5 flex h-10 items-center"><Settings size={18} strokeWidth={1.3} /></button>
          </aside>
        </div>
      </div>

      <footer className="grid h-12 grid-cols-[1fr_auto_1fr] items-center border-t border-[#54444a] bg-[linear-gradient(90deg,#241e2e_0%,#241c30_24%,#2c1932_36%,#33191f_47%,#3e161b_55%,#461412_68%,#3b1a12_83%,#311a1c_100%)]">
        <span />
        <AppStrip />
        <div className="pr-6"><Clock /></div>
      </footer>
    </section>
  );
}

export default function App() {
  return (
    <div className="flex min-h-screen w-full bg-black">
      <Explorer />
      <Browser />
    </div>
  );
}
